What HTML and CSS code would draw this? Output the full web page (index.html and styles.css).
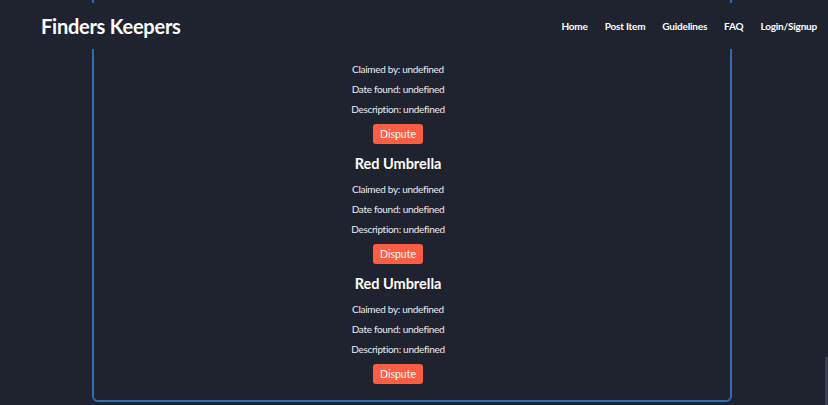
FILE: index.html
```html
<!DOCTYPE html>
<html lang="en">
<head>
<meta charset="utf-8">
<title>Finders Keepers</title>
<link rel="stylesheet" href="styles.css">
</head>
<body>
<header class="site-header">
  <div class="brand">Finders Keepers</div>
  <nav class="nav">
    <a class="nav-link" href="#">Home</a>
    <a class="nav-link" href="#">Post Item</a>
    <a class="nav-link" href="#">Guidelines</a>
    <a class="nav-link" href="#">FAQ</a>
    <a class="nav-link" href="#">Login/Signup</a>
  </nav>
</header>
<main class="panel">
  <div class="item">
    <h3 class="item-title">Red Umbrella</h3>
    <p class="item-line">Claimed by: undefined</p>
    <p class="item-line">Date found: undefined</p>
    <p class="item-line">Description: undefined</p>
    <button class="dispute">Dispute</button>
  </div>
  <div class="item">
    <h3 class="item-title">Red Umbrella</h3>
    <p class="item-line">Claimed by: undefined</p>
    <p class="item-line">Date found: undefined</p>
    <p class="item-line">Description: undefined</p>
    <button class="dispute">Dispute</button>
  </div>
  <div class="item">
    <h3 class="item-title">Red Umbrella</h3>
    <p class="item-line">Claimed by: undefined</p>
    <p class="item-line">Date found: undefined</p>
    <p class="item-line">Description: undefined</p>
    <button class="dispute">Dispute</button>
  </div>
</main>
<div class="scroll-thumb"></div>
</body>
</html>
```
FILE: styles.css
```css
html, body {
  margin: 0;
  padding: 0;
  height: 405px;
  overflow: hidden;
}
body {
  background: #1f2330;
  color: #ececf0;
  font-family: Lato, "Noto Sans", sans-serif;
}
.site-header {
  position: fixed;
  top: 3px;
  left: 0;
  right: 0;
  height: 46px;
  background: #1f2330;
  display: flex;
  align-items: center;
  justify-content: space-between;
  padding: 0 11px 0 41px;
  z-index: 2;
}
.brand {
  font-size: 20px;
  font-weight: 700;
  color: #ffffff;
  letter-spacing: -0.25px;
}
.nav {
  display: flex;
  gap: 17px;
}
.nav-link {
  color: #ffffff;
  text-decoration: none;
  font-size: 10px;
  font-weight: 700;
  letter-spacing: -0.2px;
}
.panel {
  box-sizing: border-box;
  width: 640px;
  margin-left: 92px;
  border: 2px solid #2f6db5;
  border-top: none;
  border-radius: 0 0 6px 6px;
  padding: 24px 28px 16px 0;
  display: flex;
  flex-direction: column;
  align-items: center;
}
.item {
  display: flex;
  flex-direction: column;
  align-items: center;
  margin-top: 6px;
}
.item-title {
  margin: 0 0 1px;
  height: 28px;
  line-height: 28px;
  font-size: 14.5px;
  font-weight: 700;
  color: #ffffff;
}
.item-line {
  margin: 0;
  height: 20px;
  line-height: 20px;
  font-size: 10px;
  letter-spacing: -0.3px;
}
.dispute {
  margin-top: 5px;
  height: 20px;
  width: 50px;
  padding: 0;
  border: none;
  border-radius: 3px;
  background: #fb5d45;
  color: #ffffff;
  font-family: inherit;
  font-size: 10.5px;
}
.scroll-thumb {
  position: fixed;
  right: 0;
  top: 357px;
  width: 3px;
  height: 48px;
  background: #3b3f4f;
}
```
